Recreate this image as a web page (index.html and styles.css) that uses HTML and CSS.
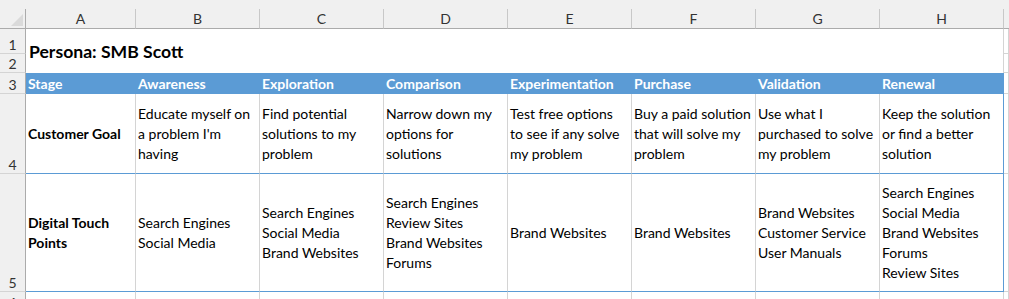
FILE: index.html
```html
<!DOCTYPE html>
<html lang="en">
<head>
    <meta charset="UTF-8">
    <title>Persona: SMB Scott</title>
    <link rel="stylesheet" href="styles.css">
</head>
<body>
    <div class="sheet">
        <!-- strip above the column letters -->
        <div class="strip"></div>

        <!-- column headers -->
        <div class="corner">
            <svg width="12" height="12" viewBox="0 0 12 12"><polygon points="12,0 12,12 0,12" fill="#dadada"/></svg>
        </div>
        <div class="colhead">A</div>
        <div class="colhead">B</div>
        <div class="colhead">C</div>
        <div class="colhead">D</div>
        <div class="colhead">E</div>
        <div class="colhead">F</div>
        <div class="colhead">G</div>
        <div class="colhead">H</div>
        <div class="colhead last"></div>

        <!-- rows 1-2: title -->
        <div class="rowhead">1</div>
        <div class="title">Persona: SMB Scott</div>
        <div class="cell"></div>
        <div class="rowhead">2</div>
        <div class="cell"></div>

        <!-- row 3: stages -->
        <div class="rowhead">3</div>
        <div class="stage">Stage</div>
        <div class="stage">Awareness</div>
        <div class="stage">Exploration</div>
        <div class="stage">Comparison</div>
        <div class="stage">Experimentation</div>
        <div class="stage">Purchase</div>
        <div class="stage">Validation</div>
        <div class="stage">Renewal</div>
        <div class="cell"></div>

        <!-- row 4: goals -->
        <div class="rowhead">4</div>
        <div class="item label">Customer Goal</div>
        <div class="item">Educate myself on<br>a problem I'm<br>having</div>
        <div class="item">Find potential<br>solutions to my<br>problem</div>
        <div class="item">Narrow down my<br>options for<br>solutions</div>
        <div class="item">Test free options<br>to see if any solve<br>my problem</div>
        <div class="item">Buy a paid solution<br>that will solve my<br>problem</div>
        <div class="item">Use what I<br>purchased to solve<br>my problem</div>
        <div class="item end">Keep the solution<br>or find a better<br>solution</div>
        <div class="cell"></div>

        <!-- row 5: touch points -->
        <div class="rowhead">5</div>
        <div class="item label">Digital Touch<br>Points</div>
        <div class="item">Search Engines<br>Social Media</div>
        <div class="item">Search Engines<br>Social Media<br>Brand Websites</div>
        <div class="item">Search Engines<br>Review Sites<br>Brand Websites<br>Forums</div>
        <div class="item">Brand Websites</div>
        <div class="item">Brand Websites</div>
        <div class="item">Brand Websites<br>Customer Service<br>User Manuals</div>
        <div class="item end">Search Engines<br>Social Media<br>Brand Websites<br>Forums<br>Review Sites</div>
        <div class="cell"></div>

        <!-- row 6 -->
        <div class="rowhead">6</div>
        <div class="cell"></div>
        <div class="cell"></div>
        <div class="cell"></div>
        <div class="cell"></div>
        <div class="cell"></div>
        <div class="cell"></div>
        <div class="cell"></div>
        <div class="cell"></div>
        <div class="cell"></div>
    </div>
</body>
</html>
```

FILE: styles.css
```css
body {
    margin: 0;
    overflow: hidden;
    background-color: #fff;
}
.sheet {
    display: grid;
    grid-template-columns: 26px 110px repeat(7, 124px) 1fr;
    grid-template-rows: 9px 20px 25px 19px 21px 80px 118px 20px;
    width: 1009px;
    height: 299px;
    overflow: hidden;
    font-family: 'Lato', sans-serif;
    font-size: 14px;
    line-height: 20px;
    color: #000;
}
.sheet > div {
    box-sizing: border-box;
}
.strip {
    grid-column: 1 / -1;
    background-color: #f0f0f0;
}
.corner {
    display: flex;
    align-items: flex-end;
    justify-content: flex-end;
    padding: 0 2px 2px 0;
    background-color: #f0f0f0;
    border-right: 1px solid #ababab;
    border-bottom: 1px solid #ababab;
}
.corner svg {
    display: block;
}
.colhead {
    display: flex;
    align-items: center;
    justify-content: center;
    background-color: #f0f0f0;
    border-right: 1px solid #c8c8c8;
    border-bottom: 1px solid #ababab;
    color: #333;
    line-height: 18px;
}
.colhead.last {
    border-right: none;
}
.rowhead {
    display: flex;
    align-items: flex-end;
    justify-content: center;
    background-color: #f0f0f0;
    border-right: 1px solid #ababab;
    border-bottom: 1px solid #d4d4d4;
    color: #333;
    line-height: 16px;
}
.cell {
    border-right: 1px solid #d4d4d4;
    border-bottom: 1px solid #d4d4d4;
}
.title {
    grid-column: span 8;
    grid-row: span 2;
    display: flex;
    align-items: center;
    padding-left: 3px;
    padding-top: 2px;
    border-right: 1px solid #d4d4d4;
    font-size: 17.6px;
    font-weight: bold;
}
.stage {
    display: flex;
    align-items: center;
    padding-left: 2px;
    background-color: #5b9bd5;
    color: #fff;
    font-weight: bold;
    white-space: nowrap;
}
.item {
    display: flex;
    align-items: center;
    padding-left: 2px;
    border-right: 1px solid #d4d4d4;
    border-bottom: 1px solid #5b9bd5;
    white-space: nowrap;
}
.item.end {
    border-right-color: #5b9bd5;
}
.label {
    font-weight: bold;
}
```
